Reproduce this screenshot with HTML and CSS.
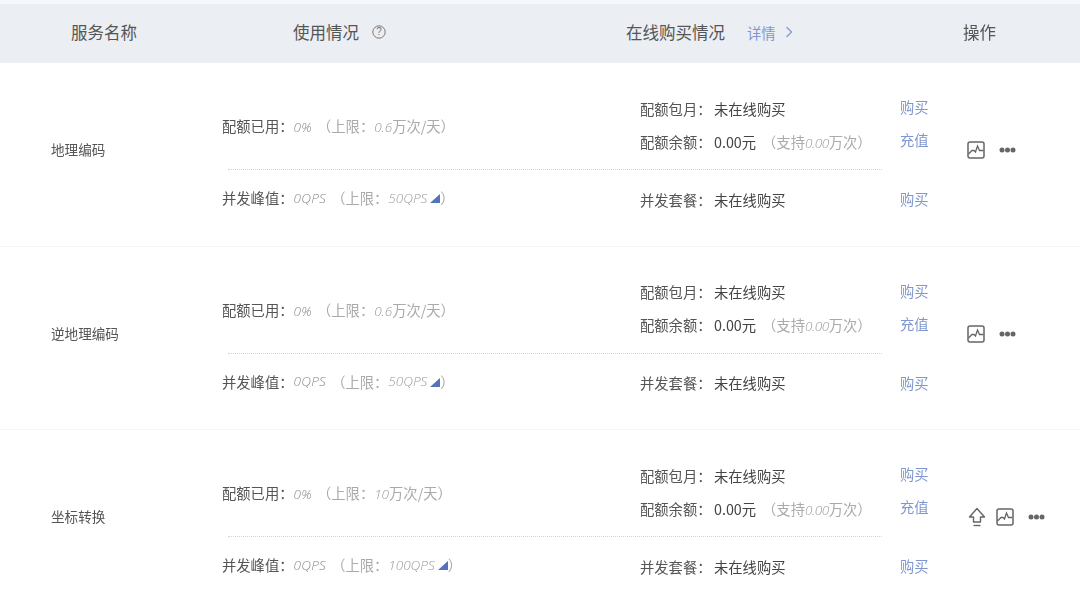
FILE: index.html
```html
<!DOCTYPE html>
<html lang="zh">
<head>
<meta charset="utf-8">
<title>服务列表</title>
<link rel="stylesheet" href="styles.css">
</head>
<body>
<svg class="defs" width="0" height="0" aria-hidden="true">
  <symbol id="chart" viewBox="0 0 18 18">
    <path d="M3 1h12a2 2 0 0 1 2 2v12a2 2 0 0 1-2 2H3a2 2 0 0 1-2-2V3a2 2 0 0 1 2-2z" fill="none" stroke="#666" stroke-width="1.5"/>
    <path d="M1.5 13l3.5-3.5h2L8.5 11l2-6 2 4.5h4" fill="none" stroke="#666" stroke-width="1.3"/>
  </symbol>
  <symbol id="dots" viewBox="0 0 17 6">
    <circle cx="3" cy="3" r="2.5" fill="#666"/><circle cx="8.5" cy="3" r="2.5" fill="#666"/><circle cx="14" cy="3" r="2.5" fill="#666"/>
  </symbol>
  <symbol id="up" viewBox="0 0 18 20">
    <path d="M9 1.5L16.5 10H12.5v5h-7v-5H1.5z" fill="none" stroke="#666" stroke-width="1.4" stroke-linejoin="round"/>
    <path d="M5.5 18.5h7" stroke="#666" stroke-width="1.4"/>
  </symbol>
</svg>

<div class="strip"></div>
<header class="head">
  <div class="h-name">服务名称</div>
  <div class="h-usage">使用情况
    <svg class="help" viewBox="0 0 14 14" width="14" height="14"><circle cx="7" cy="7" r="6.2" fill="none" stroke="#777" stroke-width="1"/><text x="7" y="10.3" text-anchor="middle" class="help-q">?</text></svg>
  </div>
  <div class="h-buy">在线购买情况 <a class="detail-link">详情<svg class="chev" viewBox="0 0 8 12" width="8" height="12"><path d="M1.5 1l5 5-5 5" fill="none" stroke="#7f97cf" stroke-width="1.2"/></svg></a></div>
  <div class="h-op">操作</div>
</header>

<section class="row">
  <div class="name">地理编码</div>
  <div class="detail">
    <div class="upper">
      <div class="usage"><span class="label">配额已用：</span><i class="num">0%</i><span class="limit">（上限：<i>0.6</i>万次/天）</span></div>
      <div class="buy">
        <div class="buy-line"><span class="blabel">配额包月：</span><span class="val">未在线购买</span></div>
        <div class="buy-line"><span class="blabel">配额余额：</span><span class="val">0.00元</span><span class="limit support">（支持<i>0.00</i>万次）</span></div>
      </div>
      <div class="links"><a>购买</a><a>充值</a></div>
    </div>
    <div class="dash"></div>
    <div class="lower">
      <div class="usage2"><span class="label">并发峰值：</span><i class="num">0QPS</i><span class="limit">（上限：<i>50QPS</i><b class="tri"></b>）</span></div>
      <div class="buy2"><span class="blabel">并发套餐：</span><span class="val">未在线购买</span></div>
      <div class="links2"><a>购买</a></div>
    </div>
  </div>
  <div class="ops">
    <svg class="ic-chart"><use href="#chart"/></svg>
    <svg class="ic-dots"><use href="#dots"/></svg>
  </div>
</section>

<section class="row">
  <div class="name">逆地理编码</div>
  <div class="detail">
    <div class="upper">
      <div class="usage"><span class="label">配额已用：</span><i class="num">0%</i><span class="limit">（上限：<i>0.6</i>万次/天）</span></div>
      <div class="buy">
        <div class="buy-line"><span class="blabel">配额包月：</span><span class="val">未在线购买</span></div>
        <div class="buy-line"><span class="blabel">配额余额：</span><span class="val">0.00元</span><span class="limit support">（支持<i>0.00</i>万次）</span></div>
      </div>
      <div class="links"><a>购买</a><a>充值</a></div>
    </div>
    <div class="dash"></div>
    <div class="lower">
      <div class="usage2"><span class="label">并发峰值：</span><i class="num">0QPS</i><span class="limit">（上限：<i>50QPS</i><b class="tri"></b>）</span></div>
      <div class="buy2"><span class="blabel">并发套餐：</span><span class="val">未在线购买</span></div>
      <div class="links2"><a>购买</a></div>
    </div>
  </div>
  <div class="ops">
    <svg class="ic-chart"><use href="#chart"/></svg>
    <svg class="ic-dots"><use href="#dots"/></svg>
  </div>
</section>

<section class="row">
  <div class="name">坐标转换</div>
  <div class="detail">
    <div class="upper">
      <div class="usage"><span class="label">配额已用：</span><i class="num">0%</i><span class="limit">（上限：<i>10</i>万次/天）</span></div>
      <div class="buy">
        <div class="buy-line"><span class="blabel">配额包月：</span><span class="val">未在线购买</span></div>
        <div class="buy-line"><span class="blabel">配额余额：</span><span class="val">0.00元</span><span class="limit support">（支持<i>0.00</i>万次）</span></div>
      </div>
      <div class="links"><a>购买</a><a>充值</a></div>
    </div>
    <div class="dash"></div>
    <div class="lower">
      <div class="usage2"><span class="label">并发峰值：</span><i class="num">0QPS</i><span class="limit">（上限：<i>100QPS</i><b class="tri"></b>）</span></div>
      <div class="buy2"><span class="blabel">并发套餐：</span><span class="val">未在线购买</span></div>
      <div class="links2"><a>购买</a></div>
    </div>
  </div>
  <div class="ops ops3">
    <svg class="ic-up"><use href="#up"/></svg>
    <svg class="ic-chart"><use href="#chart"/></svg>
    <svg class="ic-dots"><use href="#dots"/></svg>
  </div>
</section>
</body>
</html>
```
FILE: styles.css
```css
* { box-sizing: border-box; }
html, body { margin: 0; padding: 0; }
body {
  width: 1080px;
  height: 604px;
  overflow: hidden;
  background: #fff;
  color: #555;
  font-family: "Noto Sans CJK SC", "Liberation Sans", sans-serif;
  font-size: 14.3px;
  filter: blur(0.35px);
}
.defs { position: absolute; }
.strip { height: 4px; background: #f6f8fb; }
.head {
  height: 59px;
  background: #ebeef3;
  display: grid;
  grid-template-columns: 293px 333px 337px 1fr;
  align-items: center;
  padding-bottom: 3px;
  font-size: 16.5px;
  color: #555;
}
.h-name { padding-left: 71px; }
.h-usage { display: flex; align-items: center; }
.help { margin-left: 13px; }
.help-q { font-size: 10px; fill: #777; font-family: "Liberation Sans", sans-serif; }
.h-buy { display: flex; align-items: center; }
.detail-link {
  margin-left: 22px;
  font-size: 14.3px;
  color: #7f97cf;
  display: flex;
  align-items: center;
}
.chev { margin-left: 9px; }
.row {
  height: 183.5px;
  display: grid;
  grid-template-columns: 222px 738px 1fr;
  border-bottom: 1px solid #f6f6f6;
}
.name {
  padding: 0 0 10px 51px;
  align-self: center;
  font-size: 13.6px;
  color: #555;
}
.upper {
  display: grid;
  grid-template-columns: 418px 260px 1fr;
  padding-top: 28.5px;
  height: 106px;
}
.usage { align-self: start; margin-top: 23.5px; }
.label { color: #555; }
.num {
  color: #888;
  font-family: "Open Sans", "Liberation Sans", sans-serif;
  font-weight: 300;
  font-size: 13.5px;
  letter-spacing: 0.3px;
}
.limit { color: #aaa; margin-left: 5px; }
.limit i {
  color: #999;
  font-family: "Open Sans", "Liberation Sans", sans-serif;
  font-weight: 300;
  font-size: 13.5px;
}
.support { margin-left: 6px; }
.support i { letter-spacing: -0.4px; }
.buy-line { height: 33px; display: flex; align-items: center; }
.blabel { width: 74px; color: #555; }
.val { color: #444; }
.links { display: flex; flex-direction: column; }
.links a, .links2 a { color: #7f97cf; }
.links a { height: 33px; display: flex; align-items: center; margin-top: -1.5px; margin-bottom: 1.5px; }
.dash { margin: 0 78px 0 6px; border-top: 1px dotted #d5d5d5; }
.lower {
  display: grid;
  grid-template-columns: 418px 260px 1fr;
  align-items: center;
  height: 58px;
}
.usage2 { display: flex; align-items: center; margin-bottom: 3px; }
.usage2 .limit { display: flex; align-items: center; }
.buy2 { display: flex; align-items: center; }
.links2 { margin-bottom: 1px; }
.tri {
  width: 0;
  height: 0;
  margin: 2px 0 0 3px;
  border-style: solid;
  border-width: 0 0 9px 10px;
  border-color: transparent transparent #5473bd transparent;
}
.ops {
  display: flex;
  align-items: center;
  padding: 0 0 8px 7px;
}
.ops3 { padding-left: 8px; }
.ic-chart { width: 18px; height: 18px; }
.ic-dots { width: 17px; height: 6px; margin-left: 14px; }
.ic-up { width: 18px; height: 20px; margin-right: 10px; }
```
